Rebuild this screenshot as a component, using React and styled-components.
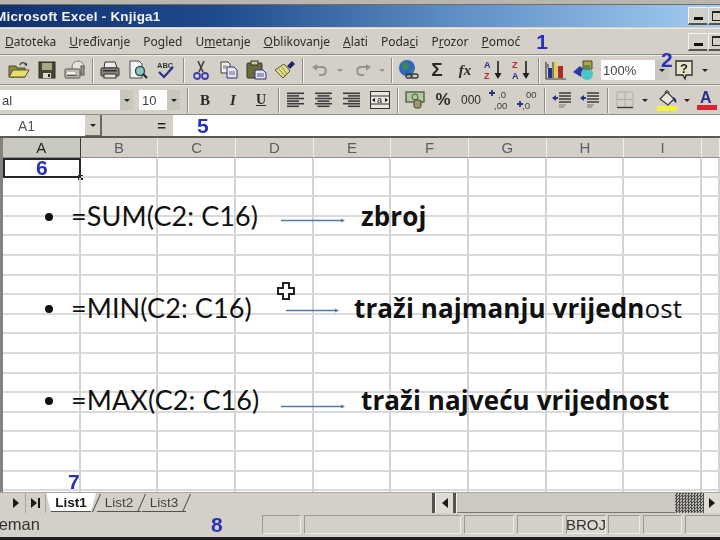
import React from 'react'
import styled, { createGlobalStyle, css } from 'styled-components'

const GlobalStyle = createGlobalStyle`
    html, body {
        margin: 0;
        padding: 0;
        background: #ffffff;
    }
`

const soft = css`
    filter: blur(0.5px);
`

const Page = styled.div`
    position: relative;
    width: 720px;
    height: 540px;
    overflow: hidden;
    display: flex;
    flex-direction: column;
    background: #d4d0c8;
    font-family: "Noto Sans", "Liberation Sans", sans-serif;
`

const TopEdge = styled.div`
    height: 4px;
    background: #b9b6ae;
    border-bottom: 1px solid #6f6d68;
`

const TitleBar = styled.div`
    ${soft}
    height: 22px;
    display: flex;
    align-items: center;
    justify-content: space-between;
    background: linear-gradient(90deg, #12306f 0%, #1f4a8c 30%, #5c8cc4 62%, #a4cdf0 100%);
`

const TitleText = styled.span`
    margin-left: -5px;
    color: #f2f2f2;
    font-family: "Liberation Sans", sans-serif;
    font-size: 13.5px;
    font-weight: 700;
    letter-spacing: 0.2px;
`

const WindowButtons = styled.div`
    display: flex;
    gap: 1px;
    width: 32px;
    overflow: hidden;
    flex-shrink: 0;
`

const WindowButton = styled.div`
    width: 19px;
    height: 18px;
    flex-shrink: 0;
    display: flex;
    align-items: ${props => props.$low ? 'flex-end' : 'center'};
    justify-content: center;
    box-sizing: border-box;
    padding-bottom: ${props => props.$low ? '3px' : '0'};
    background: #d4d0c8;
    border-top: 1px solid #f4f3f0;
    border-left: 1px solid #f4f3f0;
    border-bottom: 2px solid #55534e;
`

const MinimizeMark = styled.div`
    width: 9px;
    height: 3px;
    background: #111111;
`

const MaxMark = styled.div`
    width: 12px;
    height: 10px;
    border: 1px solid #222222;
    border-top-width: 2px;
    box-sizing: border-box;
`

const MenuBar = styled.div`
    ${soft}
    height: 27px;
    margin-top: 1px;
    display: flex;
    align-items: center;
    justify-content: space-between;
    border-top: 1px solid #ecebe6;
    border-bottom: 1px solid #8f8d87;
    box-sizing: border-box;
    background: #d4d0c8;
`

const MenuItems = styled.div`
    display: flex;
    align-items: center;
    gap: 13px;
    padding-left: 5px;
    color: #2c2c2c;
    font-size: 12px;
    white-space: nowrap;
`

const MenuItem = styled.span`
    u {
        text-underline-offset: 1px;
    }
`

const BlueNumber = styled.span`
    color: #2631b4;
    font-family: "Liberation Sans", sans-serif;
    font-size: 21px;
    font-weight: 700;
    line-height: 1;
`

const MenuNumber = styled(BlueNumber)`
    margin-left: 3px;
`

const ToolRow = styled.div`
    ${soft}
    height: ${props => props.$height}px;
    display: flex;
    align-items: center;
    padding-left: ${props => props.$left || 0}px;
    box-sizing: border-box;
    border-bottom: 1px solid #8f8d87;
    border-top: 1px solid #ecebe6;
    background: #d4d0c8;
    overflow: hidden;
`

const Slot = styled.div`
    width: ${props => props.$width || 28}px;
    height: 22px;
    flex-shrink: 0;
    margin-left: ${props => props.$offset || 0}px;
    display: flex;
    align-items: center;
    justify-content: center;
    color: #2a2a2a;
    font-family: ${props => props.$serif ? '"Liberation Serif", serif' : '"Liberation Sans", sans-serif'};
    font-size: ${props => props.$size || 13}px;
    font-weight: ${props => props.$bold ? 700 : 400};
    font-style: ${props => props.$italic ? 'italic' : 'normal'};
    text-decoration: ${props => props.$underline ? 'underline' : 'none'};
`

const Separator = styled.div`
    width: 7px;
    height: 25px;
    flex-shrink: 0;
    margin-left: ${props => props.$offset || 0}px;
    display: flex;
    justify-content: center;

    &::after {
        content: "";
        width: 1px;
        background: #8f8d87;
        border-right: 1px solid #f2f1ed;
    }
`

const Caret = styled.div`
    width: 0;
    height: 0;
    border-left: 3px solid transparent;
    border-right: 3px solid transparent;
    border-top: 3px solid ${props => props.$color || '#222222'};
`

const Combo = styled.div`
    height: 20px;
    width: ${props => props.$width}px;
    flex-shrink: 0;
    margin-left: ${props => props.$offset || 0}px;
    display: flex;
    align-items: stretch;
    font-family: "Liberation Sans", sans-serif;
    font-size: 13px;
    color: #444444;
`

const ComboValue = styled.div`
    flex: 1;
    display: flex;
    align-items: center;
    padding-left: ${props => props.$left || 2}px;
    background: #ffffff;
    overflow: hidden;
`

const ComboArrow = styled.div`
    width: ${props => props.$width || 13}px;
    display: flex;
    align-items: center;
    justify-content: center;
    background: #c9c6be;
`

const FormulaRow = styled.div`
    ${soft}
    height: 21px;
    display: flex;
    align-items: stretch;
    background: #d4d0c8;
    border-bottom: 2px solid #5a5854;
    font-family: "Liberation Sans", sans-serif;
`

const NameBox = styled.div`
    width: 85px;
    display: flex;
    align-items: center;
    padding-left: 18px;
    box-sizing: border-box;
    background: #ffffff;
    font-size: 14px;
    color: #555555;
`

const NameArrow = styled.div`
    width: 17px;
    display: flex;
    align-items: center;
    justify-content: center;
    background: #d4d0c8;
    border-right: 2px solid #6d6b66;
    border-bottom: 1px solid #6d6b66;
    box-sizing: border-box;
`

const EqualBox = styled.div`
    width: 71px;
    display: flex;
    align-items: center;
    justify-content: flex-end;
    padding-right: 7px;
    box-sizing: border-box;
    font-size: 15px;
    font-weight: 700;
    color: #222222;
`

const FormulaInput = styled.div`
    flex: 1;
    display: flex;
    align-items: center;
    padding-left: 24px;
    background: #ffffff;
`

const Sheet = styled.div`
    position: relative;
    flex: 1;
    min-height: 0;
    overflow: hidden;
    background: #ffffff;
`

const columns = `3px repeat(9, 77.66px) 1fr`

const HeaderRow = styled.div`
    ${soft}
    height: 20px;
    display: grid;
    grid-template-columns: ${columns};
    background: #d4cfc8;
    font-family: "Liberation Sans", sans-serif;
    font-size: 15px;
`

const HeaderCell = styled.div`
    display: flex;
    align-items: center;
    justify-content: center;
    box-sizing: border-box;
    border-right: 1px solid ${props => props.$active ? '#3a3a3a' : '#f1f0ec'};
    border-bottom: 1px solid #8f8d87;
    background: ${props => props.$active ? '#c8c8c0' : 'transparent'};
    color: ${props => props.$active ? '#1f1f1f' : '#5e5e5e'};
`

const Stub = styled.div`
    background: #85827c;
`

const CellGrid = styled.div`
    display: grid;
    grid-template-columns: ${columns};
    grid-auto-rows: 19.6px;
`

const Cell = styled.div`
    position: relative;
    box-sizing: border-box;
    border-right: 2px solid #d2d2d2;
    border-bottom: 2px solid #dadada;
    display: flex;
    align-items: center;
    justify-content: center;

    ${props => props.$selected && css`
        border: 2px solid #262626;
        filter: blur(0.4px);

        &::after {
            content: "";
            position: absolute;
            right: -4px;
            bottom: -4px;
            width: 5px;
            height: 5px;
            background: #262626;
        }
    `}
`

const Slide = styled.div`
    position: absolute;
    top: 59px;
    left: 0;
    right: 0;
    display: flex;
    flex-direction: column;
    gap: 52px;
    color: #111111;
`

const SlideRow = styled.div`
    height: 40px;
    display: flex;
    align-items: center;
    white-space: nowrap;
`

const Bullet = styled.div`
    width: 8px;
    height: 8px;
    margin-left: 45px;
    margin-right: 18px;
    border-radius: 50%;
    background: #111111;
    flex-shrink: 0;
`

const Formula = styled.div`
    width: 210px;
    flex-shrink: 0;
    margin-bottom: 3px;
    font-family: Lato, "Liberation Sans", sans-serif;
    font-size: 27px;
    letter-spacing: 0.1px;
`

const Arrow = styled.svg`
    flex-shrink: 0;
    margin-left: ${props => props.$left}px;
    margin-top: ${props => props.$drop}px;
`

const Meaning = styled.div`
    margin-left: ${props => props.$left}px;
    margin-bottom: 3px;
    font-family: "Open Sans", "Liberation Sans", sans-serif;
    font-size: 26px;
    font-weight: 700;
    letter-spacing: 0.1px;
`

const Thin = styled.span`
    font-weight: 400;
`

const CrossCursor = styled.svg`
    position: absolute;
    left: 276px;
    top: 143px;
`

const SheetNumber = styled(BlueNumber)`
    position: absolute;
    left: 68px;
    bottom: 0;
    filter: blur(0.4px);
`

const FloatingTwo = styled(BlueNumber)`
    position: absolute;
    left: 661px;
    top: 49px;
    filter: blur(0.4px);
`

const TabBar = styled.div`
    ${soft}
    height: 21px;
    display: flex;
    align-items: stretch;
    border-top: 1px solid #a9a7a1;
    box-sizing: border-box;
    background: #d4d0c8;
`

const TabNav = styled.div`
    width: ${props => props.$width}px;
    padding-left: ${props => props.$pad || 0}px;
    box-sizing: border-box;
    flex-shrink: 0;
    display: flex;
    align-items: center;
    justify-content: center;
    gap: 1px;
    border-right: 1px solid #a9a7a1;
`

const Triangle = styled.div`
    width: 0;
    height: 0;
    border-top: 5px solid transparent;
    border-bottom: 5px solid transparent;
    border-left: ${props => props.$left ? '0' : '6px solid #1a1a1a'};
    border-right: ${props => props.$left ? '6px solid #1a1a1a' : '0'};
`

const NavBar = styled.div`
    width: 2px;
    height: 10px;
    background: #1a1a1a;
`

const Tabs = styled.div`
    width: 386px;
    flex-shrink: 0;
    display: flex;
    font-family: "Liberation Sans", sans-serif;
    font-size: 13.5px;
`

const Tab = styled.div`
    width: ${props => props.$active ? 50 : 44}px;
    height: 19px;
    display: flex;
    align-items: center;
    justify-content: center;
    background: ${props => props.$active ? '#ffffff' : 'transparent'};
    color: ${props => props.$active ? '#161616' : '#444444'};
    font-weight: ${props => props.$active ? 700 : 400};
    border-bottom: 1px solid #55534e;
    clip-path: ${props => props.$active ? 'polygon(0 0, 100% 0, 90% 100%, 10% 100%)' : 'none'};
    box-sizing: border-box;
`

const TabSlash = styled.div`
    width: 1px;
    height: 20px;
    background: #4a4a4a;
    transform: rotate(24deg);
    flex-shrink: 0;
`

const ScrollSplit = styled.div`
    width: 3px;
    flex-shrink: 0;
    background: #55534e;
    border-right: 1px solid #f2f1ed;
`

const ScrollButton = styled.div`
    width: ${props => props.$width}px;
    flex-shrink: 0;
    display: flex;
    align-items: center;
    justify-content: center;
    background: #dedbd4;
`

const ScrollTrack = styled.div`
    flex: 1;
    background: #cdcac3;
    border-bottom: 1px solid #77756f;
`

const ScrollThumb = styled.div`
    width: 29px;
    flex-shrink: 0;
    background: repeating-conic-gradient(#4c4c4a 0% 25%, #bdbbb4 0% 50%) 0 0 / 3px 3px;
`

const StatusBar = styled.div`
    ${soft}
    height: 24px;
    display: flex;
    align-items: stretch;
    padding: 2px 0 3px;
    box-sizing: border-box;
    font-family: "Liberation Sans", sans-serif;
    font-size: 15px;
    color: #333333;
`

const StatusText = styled.div`
    width: 281px;
    flex-shrink: 0;
    display: flex;
    align-items: center;
    margin-left: -27px;
    font-size: 16.5px;
`

const StatusEight = styled(BlueNumber)`
    margin-left: 171px;
`

const StatusPanel = styled.div`
    width: ${props => props.$width}px;
    flex-shrink: 0;
    margin-left: ${props => props.$gap || 3}px;
    display: flex;
    align-items: center;
    justify-content: center;
    box-sizing: border-box;
    border-top: 1px solid #9b9992;
    border-left: 1px solid #9b9992;
    border-right: 1px solid #ecebe6;
    border-bottom: 1px solid #ecebe6;
    background: ${props => props.$lit ? '#dcd9d2' : 'transparent'};
`

const BottomEdge = styled.div`
    height: 3px;
    background: #1e1e1e;
`

/* toolbar drawings */
const OpenIcon = () => (
    <svg width="22" height="20" viewBox="0 0 22 20">
        <path d="M1 6h7l1 2h8v9H1z" fill="#8c8a3c" stroke="#4a4a2a" />
        <path d="M1 17l4-7h16l-4 7z" fill="#e6e06a" stroke="#55552c" />
        <path d="M12 5c1-3 4-3 6-1" fill="none" stroke="#3a3a3a" strokeWidth="1.4" />
        <path d="M19 6l-3-1 3-2z" fill="#3a3a3a" />
    </svg>
)

const SaveIcon = () => (
    <svg width="20" height="20" viewBox="0 0 20 20">
        <rect x="2" y="2" width="16" height="16" fill="#46462c" stroke="#2c2c22" />
        <rect x="5" y="3" width="10" height="7" fill="#a8a888" />
        <rect x="6" y="13" width="8" height="5" fill="#d8d8cc" />
        <rect x="11" y="14" width="2" height="3" fill="#222222" />
    </svg>
)

const WebPrintIcon = () => (
    <svg width="22" height="20" viewBox="0 0 22 20">
        <circle cx="14" cy="7" r="6" fill="#e4e4e0" stroke="#77777a" />
        <rect x="1" y="9" width="15" height="9" rx="1" fill="#bcbab4" stroke="#55534e" />
        <rect x="3" y="12" width="8" height="2" fill="#f0f0ee" />
        <rect x="3" y="15" width="10" height="1" fill="#55534e" />
        <rect x="17" y="6" width="3" height="9" fill="#9c9a94" stroke="#55534e" />
    </svg>
)

const PrintIcon = () => (
    <svg width="22" height="20" viewBox="0 0 22 20">
        <path d="M6 2h10l2 6H5z" fill="#eeeeec" stroke="#333333" />
        <rect x="2" y="8" width="18" height="8" rx="1" fill="#8a8984" stroke="#2e2e2e" />
        <rect x="5" y="14" width="12" height="4" fill="#e0e0da" stroke="#2e2e2e" />
        <rect x="4" y="10" width="14" height="1.5" fill="#2e2e2e" />
    </svg>
)

const PreviewIcon = () => (
    <svg width="20" height="22" viewBox="0 0 20 22">
        <path d="M2 2h9l3 3v14H2z" fill="#f4f4f2" stroke="#4a4a50" />
        <circle cx="12" cy="12" r="4.5" fill="#8fc4c4" stroke="#2a5058" strokeWidth="1.4" />
        <path d="M15 15l4 4" stroke="#222222" strokeWidth="2.2" />
    </svg>
)

const SpellIcon = () => (
    <svg width="22" height="20" viewBox="0 0 22 20">
        <text x="2" y="8" fontSize="7.5" fontWeight="700" fontFamily="Liberation Sans" fill="#333333">ABC</text>
        <path d="M4 12l5 5 9-10" fill="none" stroke="#2a2f88" strokeWidth="2.2" />
    </svg>
)

const CutIcon = () => (
    <svg width="18" height="22" viewBox="0 0 18 22">
        <path d="M6 2l5 11M12 2l-5 11" stroke="#3c3c44" strokeWidth="1.6" />
        <circle cx="5" cy="17" r="3" fill="none" stroke="#3b3fae" strokeWidth="1.8" />
        <circle cx="13" cy="17" r="3" fill="none" stroke="#3b3fae" strokeWidth="1.8" />
    </svg>
)

const CopyIcon = () => (
    <svg width="20" height="20" viewBox="0 0 20 20">
        <path d="M2 2h7l2 2v9H2z" fill="#f2f2ea" stroke="#3c3c3c" />
        <path d="M8 7h7l3 3v8H8z" fill="#e8e8f4" stroke="#2e2e70" />
        <path d="M10 12h6M10 14h6M4 6h4M4 8h3" stroke="#666688" />
    </svg>
)

const PasteIcon = () => (
    <svg width="22" height="22" viewBox="0 0 22 22">
        <rect x="1" y="4" width="15" height="15" rx="1" fill="#6a6a3c" stroke="#34341e" />
        <rect x="5" y="2" width="7" height="4" fill="#c8c8b0" stroke="#34341e" />
        <path d="M9 11h8l3 3v6H9z" fill="#e4e4f0" stroke="#2e2e78" />
        <path d="M11 15h7M11 17h7" stroke="#55558a" />
    </svg>
)

const BrushIcon = () => (
    <svg width="24" height="22" viewBox="0 0 24 22">
        <path d="M2 11l9-6 6 7-7 7z" fill="#e4dc88" stroke="#55552c" />
        <path d="M6 10l6 7M9 8l5 7" stroke="#8a8a4a" />
        <path d="M14 7l5-5 3 3-5 5z" fill="#22246a" />
    </svg>
)

const UndoIcon = ({ flip }) => (
    <svg width="20" height="16" viewBox="0 0 20 16" style={flip ? { transform: 'scaleX(-1)' } : undefined}>
        <path d="M4 5h8c5 0 5 8 0 8H9" fill="none" stroke="#96948e" strokeWidth="2" />
        <path d="M2 5l5-3v7z" fill="#96948e" />
    </svg>
)

const GlobeIcon = () => (
    <svg width="24" height="22" viewBox="0 0 24 22">
        <circle cx="10" cy="9" r="8" fill="#2e66c4" />
        <path d="M6 3c3 0 6 1 6 4s-3 2-4 5c-2-1-4-6-2-9zM14 11c2-1 3 0 3 1l-3 3z" fill="#3c8c50" />
        <rect x="9" y="15" width="6" height="4" rx="2" fill="none" stroke="#3a3a3a" strokeWidth="1.4" />
        <rect x="14" y="15" width="7" height="4" rx="2" fill="none" stroke="#3a3a3a" strokeWidth="1.4" />
    </svg>
)

const SortIcon = ({ top, bottom, topColor, bottomColor }) => (
    <svg width="22" height="22" viewBox="0 0 22 22">
        <text x="2" y="9" fontSize="9" fontWeight="700" fontFamily="Liberation Sans" fill={topColor}>{top}</text>
        <text x="2" y="20" fontSize="9" fontWeight="700" fontFamily="Liberation Sans" fill={bottomColor}>{bottom}</text>
        <path d="M16 2v14" stroke="#1f1f1f" strokeWidth="1.6" />
        <path d="M12.5 14h7l-3.5 6z" fill="#1f1f1f" />
    </svg>
)

const ChartIcon = () => (
    <svg width="22" height="22" viewBox="0 0 22 22">
        <path d="M1 3v17h20" fill="none" stroke="#3c3c3c" strokeWidth="1.2" />
        <rect x="3" y="9" width="4" height="10" fill="#2a2e8c" />
        <rect x="8" y="3" width="4" height="16" fill="#e2d24a" />
        <rect x="13" y="7" width="5" height="12" fill="#b02a2a" />
        <path d="M3 5v4M8 3v16" stroke="#333333" />
    </svg>
)

const MapIcon = () => (
    <svg width="24" height="22" viewBox="0 0 24 22">
        <path d="M11 2h9v8h-9z" fill="#b2a24a" stroke="#46462c" />
        <path d="M1 13l7-6 4 4-3 7z" fill="#2a38a4" />
        <circle cx="15" cy="15" r="6" fill="#4cc4c8" />
        <path d="M12 6h6v5h-6z" fill="#5a8a52" />
    </svg>
)

const HelpIcon = () => (
    <svg width="20" height="22" viewBox="0 0 20 22">
        <path d="M2 2h16v14h-6l-1 4-2-4H2z" fill="#e8e4c8" stroke="#2a2a2a" strokeWidth="1.3" />
        <text x="6" y="14" fontSize="13" fontWeight="700" fontFamily="Liberation Sans" fill="#222222">?</text>
    </svg>
)

const AlignIcon = ({ align }) => {
    const rows = [0, 1, 2, 3, 4, 5]
    return (
        <svg width="18" height="16" viewBox="0 0 18 16">
            {rows.map(row => {
                const width = row % 2 === 0 ? 17 : 12
                const x = align === 'left' ? 0 : align === 'center' ? (17 - width) / 2 : 17 - width
                return <rect key={row} x={x} y={row * 2.6 + 0.5} width={width} height="1.6" fill="#3c3c3c" />
            })}
        </svg>
    )
}

const MergeIcon = () => (
    <svg width="20" height="18" viewBox="0 0 20 18">
        <rect x="0.5" y="0.5" width="19" height="17" fill="#e8e6e0" stroke="#333333" />
        <path d="M1 5h18M1 13h18" stroke="#333333" />
        <path d="M2 9l3-2v4zM18 9l-3-2v4z" fill="#111111" />
        <text x="7" y="12" fontSize="9" fontFamily="Liberation Sans" fill="#222222">a</text>
    </svg>
)

const CurrencyIcon = () => (
    <svg width="20" height="18" viewBox="0 0 20 18">
        <rect x="1" y="1" width="18" height="10" fill="#b4c8a0" stroke="#3e5c3a" strokeWidth="1.3" />
        <circle cx="10" cy="6" r="3" fill="none" stroke="#3e5c3a" />
        <rect x="9" y="9" width="7" height="8" rx="2" fill="#9a9a6a" stroke="#44442c" />
    </svg>
)

const DecimalText = styled.text`
    font-family: "Liberation Sans", sans-serif;
    font-size: 9.5px;
    fill: #3c3c3c;
`

const DecimalIcon = ({ more }) => (
    <svg width="22" height="22" viewBox="0 0 22 22">
        <DecimalText x="10" y="9">{more ? ',0' : '00'}</DecimalText>
        <DecimalText x="6" y="20">{more ? ',00' : ',0'}</DecimalText>
        <path d={more ? 'M1 4h6M4 1v6' : 'M1 15h6M4 12v6'} stroke="#2a2f88" strokeWidth="1.8" />
    </svg>
)

const IndentIcon = () => (
    <svg width="20" height="18" viewBox="0 0 20 18">
        <path d="M7 2h12M7 5h12M7 8h12M7 11h12" stroke="#3c3c3c" strokeWidth="1.5" />
        <path d="M6 7H1" stroke="#2a2f88" strokeWidth="2" />
        <path d="M0 7l4-3v6z" fill="#2a2f88" />
        <path d="M7 14h7M7 16h5" stroke="#77757a" />
    </svg>
)

const BordersIcon = () => (
    <svg width="18" height="18" viewBox="0 0 18 18">
        <path d="M1 1v15M9 1v15M17 1v15M1 1h16M1 8.5h16" stroke="#b0aea8" />
        <path d="M1 16.5h16" stroke="#3c3c3c" strokeWidth="1.4" />
    </svg>
)

const FillIcon = () => (
    <svg width="24" height="22" viewBox="0 0 24 22">
        <path d="M4 10l7-7 7 7-6 6z" fill="#e8e8e2" stroke="#333333" strokeWidth="1.2" />
        <path d="M17 8c3 1 4 4 3 6-2-1-3-3-3-6z" fill="#2a2f88" />
        <path d="M9 4c0-3 4-3 4 0" fill="none" stroke="#333333" />
        <rect x="1" y="17" width="20" height="5" fill="#f2f23c" />
    </svg>
)

const FontColorIcon = () => (
    <svg width="22" height="22" viewBox="0 0 22 22">
        <text x="3" y="14" fontSize="16" fontWeight="700" fontFamily="Liberation Sans" fill="#2a2f88">A</text>
        <rect x="0" y="16" width="20" height="5" fill="#e0202c" />
    </svg>
)

const sheetRows = Array.from({ length: 18 })
const letters = ['A', 'B', 'C', 'D', 'E', 'F', 'G', 'H', 'I', '']

function App() {
    return (
        <Page>
            <GlobalStyle />
            <TopEdge />
            <TitleBar>
                <TitleText>Microsoft Excel - Knjiga1</TitleText>
                <WindowButtons>
                    <WindowButton $low><MinimizeMark /></WindowButton>
                    <WindowButton><MaxMark /></WindowButton>
                </WindowButtons>
            </TitleBar>

            <MenuBar>
                <MenuItems>
                    <MenuItem><u>D</u>atoteka</MenuItem>
                    <MenuItem><u>U</u>ređivanje</MenuItem>
                    <MenuItem>Po<u>g</u>led</MenuItem>
                    <MenuItem>U<u>m</u>etanje</MenuItem>
                    <MenuItem><u>O</u>blikovanje</MenuItem>
                    <MenuItem><u>A</u>lati</MenuItem>
                    <MenuItem>Poda<u>c</u>i</MenuItem>
                    <MenuItem>P<u>r</u>ozor</MenuItem>
                    <MenuItem><u>P</u>omoć</MenuItem>
                    <MenuNumber>1</MenuNumber>
                </MenuItems>
                <WindowButtons>
                    <WindowButton $low><MinimizeMark /></WindowButton>
                    <WindowButton><MaxMark /></WindowButton>
                </WindowButtons>
            </MenuBar>

            <ToolRow $height={30} $left={5}>
                <Slot><OpenIcon /></Slot>
                <Slot><SaveIcon /></Slot>
                <Slot><WebPrintIcon /></Slot>
                <Separator />
                <Slot><PrintIcon /></Slot>
                <Slot><PreviewIcon /></Slot>
                <Slot><SpellIcon /></Slot>
                <Separator />
                <Slot><CutIcon /></Slot>
                <Slot><CopyIcon /></Slot>
                <Slot><PasteIcon /></Slot>
                <Slot><BrushIcon /></Slot>
                <Separator />
                <Slot><UndoIcon /></Slot>
                <Slot $width={12}><Caret $color="#96948e" /></Slot>
                <Slot $width={26} $offset={4}><UndoIcon flip /></Slot>
                <Slot $width={12}><Caret $color="#96948e" /></Slot>
                <Separator />
                <Slot><GlobeIcon /></Slot>
                <Slot $size={19} $bold>Σ</Slot>
                <Slot $size={15} $italic $bold $serif>fx</Slot>
                <Slot><SortIcon top="A" bottom="Z" topColor="#2a2f88" bottomColor="#b82a36" /></Slot>
                <Slot><SortIcon top="Z" bottom="A" topColor="#b82a36" bottomColor="#2a2f88" /></Slot>
                <Separator />
                <Slot><ChartIcon /></Slot>
                <Slot><MapIcon /></Slot>
                <Combo $width={68} $offset={3}>
                    <ComboValue>100%</ComboValue>
                    <ComboArrow $width={14}><Caret /></ComboArrow>
                </Combo>
                <Slot $offset={1}><HelpIcon /></Slot>
                <Slot $width={12} $offset={1}><Caret /></Slot>
            </ToolRow>

            <ToolRow $height={30}>
                <Combo $width={133}>
                    <ComboValue $left={0}>al</ComboValue>
                    <ComboArrow><Caret /></ComboArrow>
                </Combo>
                <Combo $width={41} $offset={6}>
                    <ComboValue $left={3}>10</ComboValue>
                    <ComboArrow><Caret /></ComboArrow>
                </Combo>
                <Separator $offset={4} />
                <Slot $serif $bold $size={15}>B</Slot>
                <Slot $serif $bold $italic $size={15}>I</Slot>
                <Slot $serif $bold $underline $size={14}>U</Slot>
                <Separator />
                <Slot><AlignIcon align="left" /></Slot>
                <Slot><AlignIcon align="center" /></Slot>
                <Slot><AlignIcon align="right" /></Slot>
                <Slot><MergeIcon /></Slot>
                <Separator />
                <Slot><CurrencyIcon /></Slot>
                <Slot $size={17} $bold>%</Slot>
                <Slot $size={12}>000</Slot>
                <Slot><DecimalIcon more /></Slot>
                <Slot><DecimalIcon /></Slot>
                <Separator />
                <Slot><IndentIcon /></Slot>
                <Slot><IndentIcon /></Slot>
                <Separator />
                <Slot><BordersIcon /></Slot>
                <Slot $width={12}><Caret /></Slot>
                <Slot $offset={3}><FillIcon /></Slot>
                <Slot $width={12} $offset={-1}><Caret /></Slot>
                <Slot $offset={1}><FontColorIcon /></Slot>
            </ToolRow>

            <FormulaRow>
                <NameBox>A1</NameBox>
                <NameArrow><Caret /></NameArrow>
                <EqualBox>=</EqualBox>
                <FormulaInput><BlueNumber>5</BlueNumber></FormulaInput>
            </FormulaRow>

            <Sheet>
                <HeaderRow>
                    <Stub />
                    {letters.map((letter, i) => (
                        <HeaderCell key={i} $active={i === 0}>{letter}</HeaderCell>
                    ))}
                </HeaderRow>
                <CellGrid>
                    {sheetRows.map((_, row) => (
                        <React.Fragment key={row}>
                            <Stub />
                            {letters.map((letter, col) => (
                                <Cell key={col} $selected={row === 0 && col === 0}>
                                    {row === 0 && col === 0 ? <BlueNumber>6</BlueNumber> : null}
                                </Cell>
                            ))}
                        </React.Fragment>
                    ))}
                </CellGrid>

                <Slide>
                    <SlideRow>
                        <Bullet />
                        <Formula>=SUM(C2: C16)</Formula>
                        <Arrow $left={0} $drop={6} width="64" height="7" viewBox="0 0 64 7">
                            <path d="M0 3.5h60" stroke="#4f7ba6" strokeWidth="1.3" />
                            <path d="M60 1.5l4 2-4 2z" fill="#4f7ba6" />
                        </Arrow>
                        <Meaning $left={16}>zbroj</Meaning>
                    </SlideRow>
                    <SlideRow>
                        <Bullet />
                        <Formula>=MIN(C2: C16)</Formula>
                        <Arrow $left={5} $drop={2} width="53" height="7" viewBox="0 0 53 7">
                            <path d="M0 3.5h49" stroke="#4f7ba6" strokeWidth="1.3" />
                            <path d="M49 1.5l4 2-4 2z" fill="#4f7ba6" />
                        </Arrow>
                        <Meaning $left={15}>traži najmanju vrijedn<Thin>ost</Thin></Meaning>
                    </SlideRow>
                    <SlideRow>
                        <Bullet />
                        <Formula>=MAX(C2: C16)</Formula>
                        <Arrow $left={0} $drop={10} width="64" height="7" viewBox="0 0 64 7">
                            <path d="M0 3.5h60" stroke="#4f7ba6" strokeWidth="1.3" />
                            <path d="M60 1.5l4 2-4 2z" fill="#4f7ba6" />
                        </Arrow>
                        <Meaning $left={16}>traži najveću vrijednost</Meaning>
                    </SlideRow>
                </Slide>

                <CrossCursor width="20" height="20" viewBox="0 0 20 20">
                    <path d="M7 2h6v5h5v6h-5v5H7v-5H2V7h5z" fill="#ffffff" stroke="#222222" strokeWidth="2" />
                </CrossCursor>
                <SheetNumber>7</SheetNumber>
            </Sheet>

            <TabBar>
                <TabNav $width={26} $pad={6}><Triangle /></TabNav>
                <TabNav $width={20}><Triangle /><NavBar /></TabNav>
                <Tabs>
                    <Tab $active>List1</Tab>
                    <TabSlash />
                    <Tab>List2</Tab>
                    <TabSlash />
                    <Tab>List3</Tab>
                    <TabSlash />
                </Tabs>
                <ScrollSplit />
                <ScrollButton $width={17}><Triangle $left /></ScrollButton>
                <ScrollSplit />
                <ScrollTrack />
                <ScrollThumb />
                <ScrollButton $width={16}><Triangle /></ScrollButton>
            </TabBar>

            <StatusBar>
                <StatusText>
                    Spreman
                    <StatusEight>8</StatusEight>
                </StatusText>
                <StatusPanel $width={39} $gap={8} />
                <StatusPanel $width={157} />
                <StatusPanel $width={50} />
                <StatusPanel $width={46} />
                <StatusPanel $width={40} $lit>BROJ</StatusPanel>
                <StatusPanel $width={32} $gap={2} />
                <StatusPanel $width={39} />
                <StatusPanel $width={40} />
            </StatusBar>
            <BottomEdge />
            <FloatingTwo>2</FloatingTwo>
        </Page>
    )
}

export default App
